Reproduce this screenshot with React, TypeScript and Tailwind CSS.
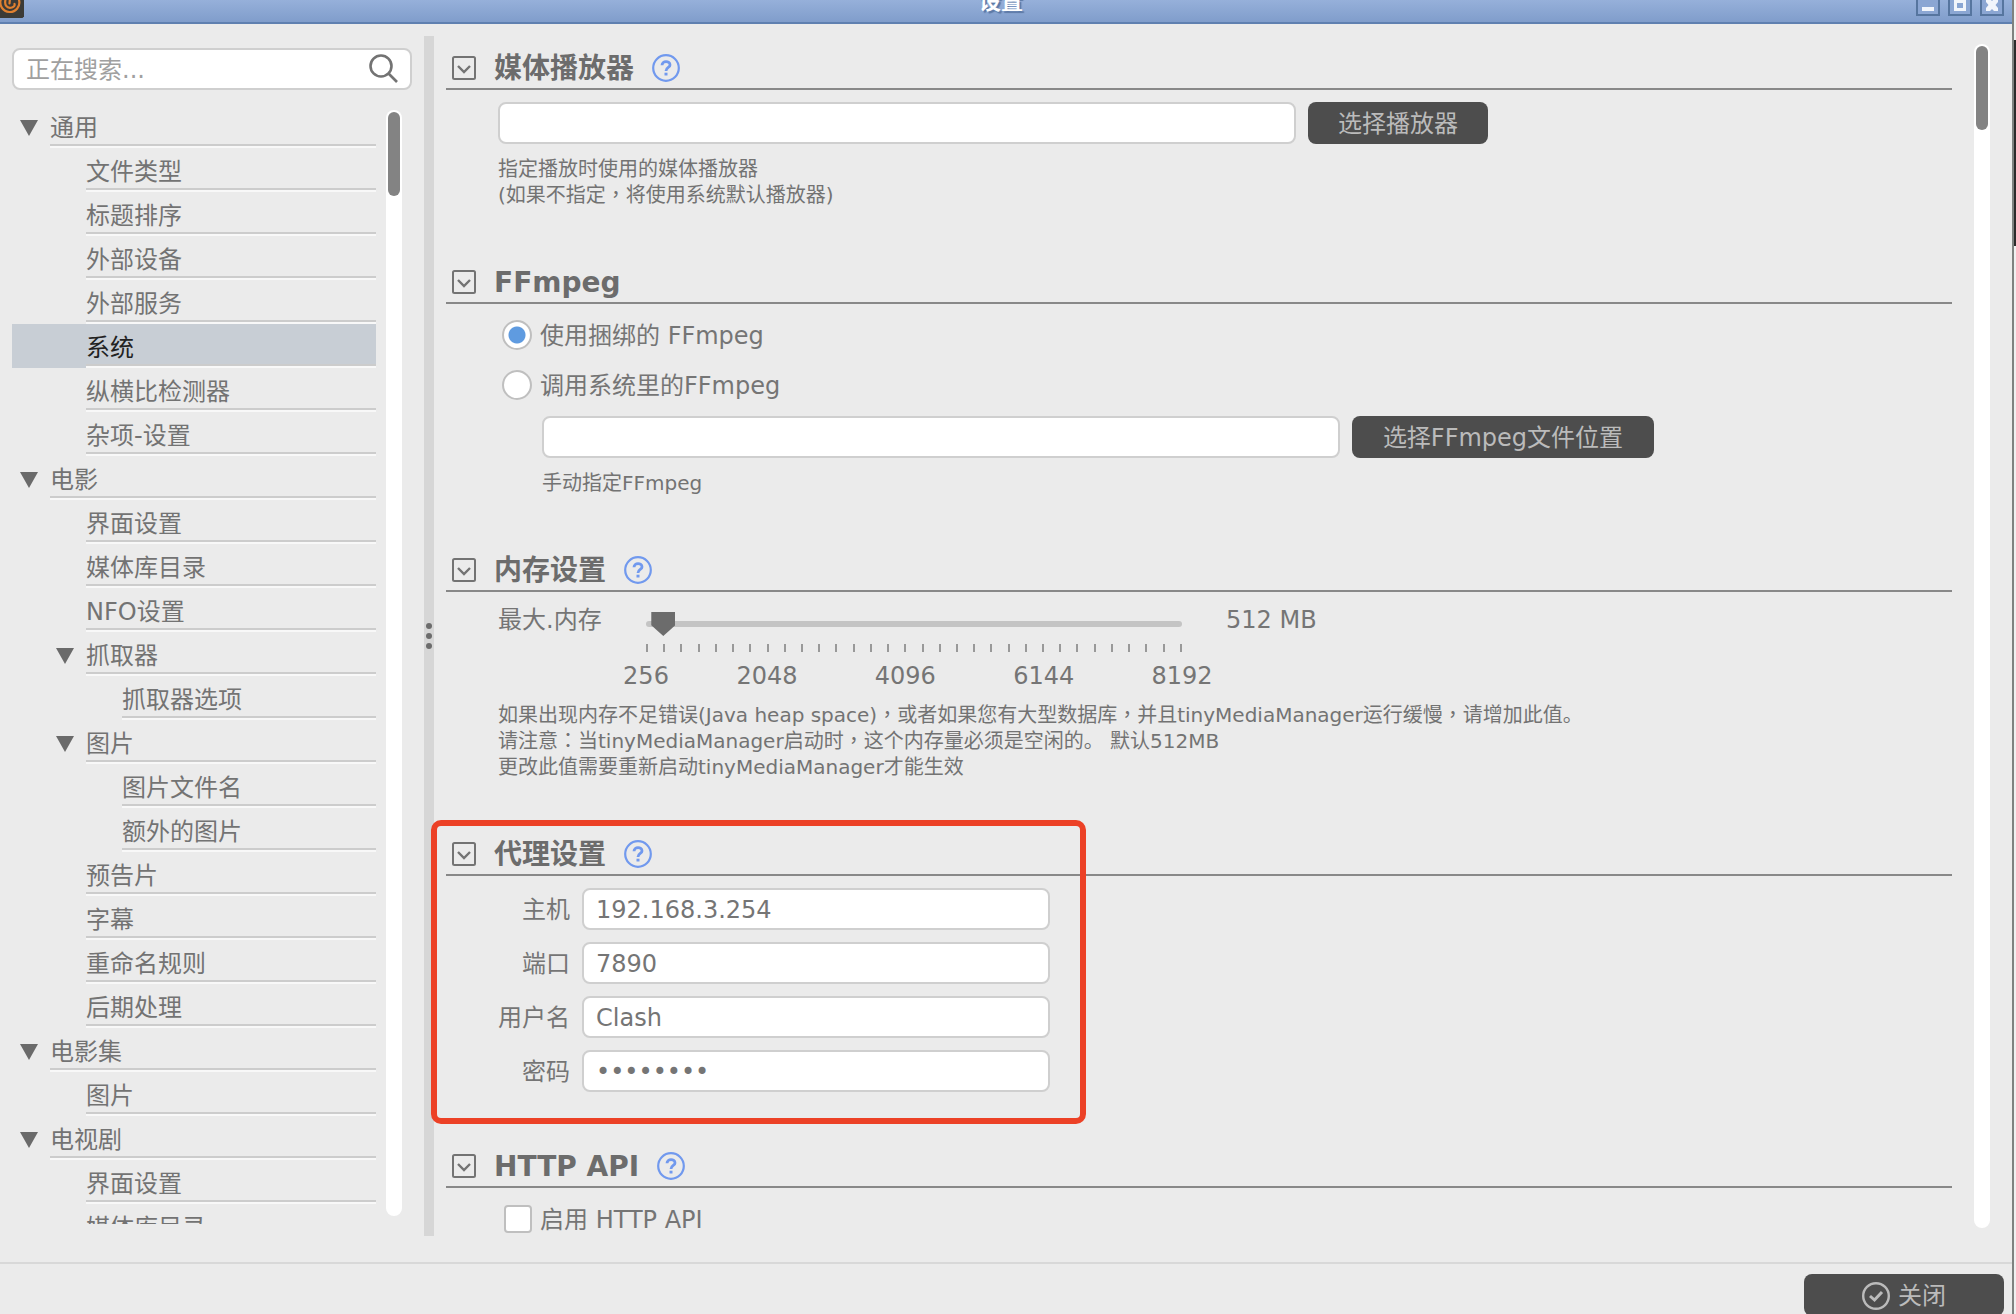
import { Fragment, useState } from "react";
import type { ReactNode } from "react";

type TreeItem = { label: string; level: 0 | 1 | 2; branch?: boolean };

const tree: TreeItem[] = [
  { label: "通用", level: 0, branch: true },
  { label: "文件类型", level: 1 },
  { label: "标题排序", level: 1 },
  { label: "外部设备", level: 1 },
  { label: "外部服务", level: 1 },
  { label: "系统", level: 1 },
  { label: "纵横比检测器", level: 1 },
  { label: "杂项-设置", level: 1 },
  { label: "电影", level: 0, branch: true },
  { label: "界面设置", level: 1 },
  { label: "媒体库目录", level: 1 },
  { label: "NFO设置", level: 1 },
  { label: "抓取器", level: 1, branch: true },
  { label: "抓取器选项", level: 2 },
  { label: "图片", level: 1, branch: true },
  { label: "图片文件名", level: 2 },
  { label: "额外的图片", level: 2 },
  { label: "预告片", level: 1 },
  { label: "字幕", level: 1 },
  { label: "重命名规则", level: 1 },
  { label: "后期处理", level: 1 },
  { label: "电影集", level: 0, branch: true },
  { label: "图片", level: 1 },
  { label: "电视剧", level: 0, branch: true },
  { label: "界面设置", level: 1 },
  { label: "媒体库目录", level: 1 },
];

const indent = { 0: "pl-2", 1: "pl-11", 2: "pl-20" };

const fieldClass =
  "h-[42px] min-w-0 rounded-lg border-2 border-[#cfcfcf] bg-white px-3 pt-0.5 text-2xl text-[#757575] outline-none";
const buttonClass =
  "h-[42px] shrink-0 rounded-lg bg-[#4d4d4d] pt-0.5 text-2xl leading-10 text-[#bbbbbb]";

function TitleBar() {
  return (
    <header className="relative flex h-6 shrink-0 items-end justify-between overflow-hidden border-b-2 border-[#5f80b0] bg-linear-to-b from-[#96b0da] to-[#809dcb]">
      <svg className="h-[18px] w-6 self-start" viewBox="0 0 24 18" aria-hidden="true">
        <path d="M0 0H24V16.5L22.5 18H0Z" fill="#3c3b37" />
        <g fill="none" stroke="#e08030" strokeWidth="2.2" strokeLinecap="round">
          <path d="M1 -1A9.5 9.5 0 1 0 19 0" />
          <path d="M6 -2C3.500 5 7 9 12 7.500C14 7 15 5.500 14.500 4" />
          <path d="M10 -2L9.500 3.500" />
        </g>
      </svg>
      <h1 className="absolute inset-x-0 -top-3.5 pr-2.5 text-center text-[22px] leading-8 font-bold text-white [text-shadow:2px_2px_1px_#5c79a6]">
        设置
      </h1>
      <div className="relative flex gap-2 pr-2 pb-1.5">
        <WindowButton label="最小化">
          <path d="M6 15H18V19H6Z" />
        </WindowButton>
        <WindowButton label="最大化">
          <path fillRule="evenodd" d="M6 6H18V19H6ZM9 11V16H15V11Z" />
        </WindowButton>
        <WindowButton label="关闭窗口">
          <path d="M6 7H10L12 9L14 7H18V10L15.500 13L18 16V19H14L12 17L10 19H6V16L8.500 13L6 10Z" />
        </WindowButton>
      </div>
    </header>
  );
}

function WindowButton({ label, children }: { label: string; children: ReactNode }) {
  return (
    <button type="button" aria-label={label} className="size-6 border-2 border-[#56759f] bg-[#8ba6d3]">
      <svg viewBox="2 2 20 20" className="size-5 fill-[#f2f5fb]" aria-hidden="true">
        {children}
      </svg>
    </button>
  );
}

function Scrollbar() {
  return (
    <div className="w-4 shrink-0 rounded-full bg-white p-0.5">
      <div className="h-[84px] rounded-full bg-[#838383]" />
    </div>
  );
}

function Sidebar() {
  const [selected, setSelected] = useState(5);
  return (
    <aside className="flex w-[424px] shrink-0 flex-col pt-6 pl-3">
      <div className="relative mr-3">
        <input
          type="search"
          aria-label="搜索"
          placeholder="正在搜索..."
          className={`${fieldClass} w-full pr-12 placeholder:text-[#a0a0a0]`}
        />
        <svg
          className="absolute top-1 right-3 size-8 fill-none stroke-[#737373] stroke-[2.6]"
          viewBox="0 0 32 32"
          aria-hidden="true"
        >
          <circle cx="13" cy="14" r="10.500" />
          <path d="M20.500 21.500L29 30" />
        </svg>
      </div>
      <div className="mt-3.5 flex min-h-0 flex-1 pb-3">
        <nav className="min-w-0 flex-1 overflow-hidden">
          {tree.map((item, i) => (
            <button
              key={i}
              type="button"
              onClick={() => setSelected(i)}
              className={`flex h-11 w-full text-left text-2xl ${indent[item.level]} ${
                i === selected ? "bg-[#c8ced5] text-[#222222]" : "text-[#737373]"
              }`}
            >
              <span className="flex w-[30px] shrink-0 pt-4">
                {item.branch && (
                  <svg className="h-4 w-[18px] fill-[#6a6a6a]" viewBox="0 0 18 16" aria-hidden="true">
                    <path d="M0 0H18L9 16Z" />
                  </svg>
                )}
              </span>
              <span className="h-full flex-1 border-b-2 border-[#f8f8f8]">
                <span className="block h-[42px] border-b-2 border-[#cccccc] pt-1.5 leading-9">{item.label}</span>
              </span>
            </button>
          ))}
        </nav>
        <div className="mt-1.5 mb-2 ml-2.5 flex w-[38px]">
          <Scrollbar />
        </div>
      </div>
    </aside>
  );
}

function Section({
  title,
  help,
  className,
  children,
}: {
  title: string;
  help?: boolean;
  className: string;
  children: ReactNode;
}) {
  return (
    <section className={`relative ${className}`}>
      <div className="flex h-11 items-center border-b-2 border-[#888888] pt-0.5 pl-1.5">
        <button type="button" aria-label={`折叠 ${title}`}>
          <svg className="size-6 fill-none stroke-[#737373] stroke-2" viewBox="0 0 24 24" aria-hidden="true">
            <rect x="1" y="1" width="22" height="22" rx="1.500" />
            <path d="M6 10L12 16L18 10" strokeWidth="2.400" />
          </svg>
        </button>
        <h2 className="ml-[18px] pt-0.5 text-[28px] leading-10 font-bold text-[#6c6c6c]">{title}</h2>
        {help && (
          <a href="#help" aria-label={`帮助 ${title}`} className="ml-[18px]">
            <svg className="size-7 fill-none stroke-[#7199ee]" viewBox="0 0 28 28" aria-hidden="true">
              <circle cx="14" cy="14" r="12.800" strokeWidth="2.200" />
              <path d="M10 11.200C10 6.500 18 6.500 18 11C18 13.700 14 13.300 14 17" strokeWidth="2.800" />
              <path d="M14 18.700V21.500" strokeWidth="3" />
            </svg>
          </a>
        )}
      </div>
      {children}
    </section>
  );
}

/* Full-width commas and colons sit in the middle of their cell. */
function Hint({ lines, className }: { lines: string[]; className?: string }) {
  return (
    <p className={`text-xl leading-[26px] text-[#737373] ${className ?? ""}`}>
      {lines.map((line) => (
        <span key={line} className="block">
          {line.split(/([，：])/).map((part, i) =>
            i % 2 === 1 ? (
              <span key={i} className="font-['Noto_Sans_CJK_TC'] leading-none">
                {part}
              </span>
            ) : (
              <Fragment key={i}>{part}</Fragment>
            ),
          )}
        </span>
      ))}
    </p>
  );
}

const ticks = Array.from({ length: 32 }, (_, i) => 256 + i * 256);
const tickLabels = [256, 2048, 4096, 6144, 8192];
const percent = (v: number) => `${((v - 256) / (8192 - 256)) * 100}%`;

function MemorySlider() {
  const [memory, setMemory] = useState(512);
  return (
    <div className="flex h-[110px] pt-2.5 pl-[52px] text-2xl leading-9 text-[#757575]">
      <label htmlFor="memory" className="w-[148px]">
        最大.内存
      </label>
      <div className="relative w-[536px]">
        <div className="absolute inset-x-0 top-[19px] h-1.5 rounded-full bg-[#c4c4c4]" />
        <input
          id="memory"
          type="range"
          min={256}
          max={8192}
          step={256}
          value={memory}
          onChange={(e) => setMemory(Number(e.target.value))}
          className="absolute top-2.5 -left-3 h-6 w-[560px] appearance-none bg-transparent [&::-webkit-slider-thumb]:h-6 [&::-webkit-slider-thumb]:w-6 [&::-webkit-slider-thumb]:appearance-none [&::-webkit-slider-thumb]:bg-[#6c6c6c] [&::-webkit-slider-thumb]:[clip-path:polygon(0_0,100%_0,100%_55%,50%_100%,0_55%)]"
        />
        <div className="flex justify-between pt-[42px]">
          {ticks.map((t) => (
            <span key={t} className="h-2 w-0.5 bg-[#999999]" />
          ))}
        </div>
        {tickLabels.map((v) => (
          <span key={v} className="absolute top-14 -translate-x-1/2" style={{ left: percent(v) }}>
            {v}
          </span>
        ))}
      </div>
      <output htmlFor="memory" className="ml-11 whitespace-pre">
        {memory} MB
      </output>
    </div>
  );
}

function Radio({ label, checked, onSelect }: { label: string; checked: boolean; onSelect: () => void }) {
  return (
    <label className="flex h-[50px] items-center text-2xl text-[#757575]">
      <input
        type="radio"
        name="ffmpeg"
        checked={checked}
        onChange={onSelect}
        className="mr-2 size-[30px] appearance-none rounded-full border-2 border-[#bfbfbf] bg-white bg-clip-padding checked:bg-[radial-gradient(circle,#5f9be0_8px,#ffffff_9px)]"
      />
      <span className="pt-0.5">{label}</span>
    </label>
  );
}

const proxy = [
  { id: "host", label: "主机", value: "192.168.3.254", type: "text" },
  { id: "port", label: "端口", value: "7890", type: "text" },
  { id: "user", label: "用户名", value: "Clash", type: "text" },
  { id: "password", label: "密码", value: "password", type: "password" },
];

function Settings() {
  const [bundled, setBundled] = useState(true);
  return (
    <main className="relative -ml-1 flex min-w-0 flex-1 pl-1">
      <div className="-ml-1 min-w-0 flex-1 overflow-hidden pt-[22px] pr-[22px] pl-4">
        <Section title="媒体播放器" help className="h-[214px]">
          <div className="mt-3 flex gap-3 pl-[52px]">
            <input type="text" aria-label="媒体播放器" className={`${fieldClass} w-[798px]`} />
            <button type="button" className={`${buttonClass} w-[180px]`}>
              选择播放器
            </button>
          </div>
          <Hint
            className="mt-3 pl-[52px]"
            lines={["指定播放时使用的媒体播放器", "(如果不指定，将使用系统默认播放器)"]}
          />
        </Section>

        <Section title="FFmpeg" className="h-72">
          <div className="pt-1.5 pl-14">
            <Radio label="使用捆绑的 FFmpeg" checked={bundled} onSelect={() => setBundled(true)} />
            <Radio label="调用系统里的FFmpeg" checked={!bundled} onSelect={() => setBundled(false)} />
          </div>
          <div className="mt-1.5 flex gap-3 pl-24">
            <input type="text" aria-label="FFmpeg 路径" className={`${fieldClass} w-[798px]`} />
            <button type="button" className={`${buttonClass} w-[302px]`}>
              选择FFmpeg文件位置
            </button>
          </div>
          <Hint className="mt-3 pl-24" lines={["手动指定FFmpeg"]} />
        </Section>

        <Section title="内存设置" help className="h-[284px]">
          <MemorySlider />
          <Hint
            className="pl-[52px]"
            lines={[
              "如果出现内存不足错误(Java heap space)，或者如果您有大型数据库，并且tinyMediaManager运行缓慢，请增加此值。",
              "请注意：当tinyMediaManager启动时，这个内存量必须是空闲的。 默认512MB",
              "更改此值需要重新启动tinyMediaManager才能生效",
            ]}
          />
        </Section>

        <Section title="代理设置" help className="h-[312px]">
          <div className="mt-3 flex flex-col gap-3">
            {proxy.map((f) => (
              <div key={f.id} className="flex items-center">
                <label htmlFor={f.id} className="w-[136px] pt-0.5 pr-3 text-right text-2xl text-[#757575]">
                  {f.label}
                </label>
                <input id={f.id} type={f.type} defaultValue={f.value} className={`${fieldClass} w-[468px]`} />
              </div>
            ))}
          </div>
          <div className="pointer-events-none absolute -top-3 -left-[15px] h-[304px] w-[655px] rounded-[10px] border-6 border-[#ec4126]" />
        </Section>

        <Section title="HTTP API" help className="h-24">
          <label className="flex h-[62px] items-center pl-[58px] text-2xl text-[#757575]">
            <input
              type="checkbox"
              className="mr-2 size-7 appearance-none rounded border-2 border-[#bfbfbf] bg-white checked:bg-[#5f9be0]"
            />
            <span className="pt-0.5">启用 HTTP API</span>
          </label>
        </Section>
      </div>
      <div className="mt-5 mr-[22px] mb-2 flex">
        <Scrollbar />
      </div>
    </main>
  );
}

export default function App() {
  return (
    <div className="flex h-screen overflow-hidden bg-[#ebebeb] font-['DejaVu_Sans','Noto_Sans_CJK_SC',sans-serif]">
      <div className="flex min-w-0 flex-1 flex-col">
        <TitleBar />
        <div className="flex min-h-0 flex-1">
          <Sidebar />
          <div className="mt-3 flex w-2.5 shrink-0 flex-col items-center justify-center gap-1 bg-[#d6d6d6]">
            <span className="size-1.5 rounded-full bg-[#6c6c6c]" />
            <span className="size-1.5 rounded-full bg-[#6c6c6c]" />
            <span className="size-1.5 rounded-full bg-[#6c6c6c]" />
          </div>
          <Settings />
        </div>
        <footer className="mt-[26px] flex h-[52px] shrink-0 justify-end border-t-2 border-[#d8d8d8] pt-2.5 pr-2">
          <button type="button" className={`${buttonClass} flex w-[200px] items-center justify-center gap-2`}>
            <svg className="size-7 fill-none stroke-[#bbbbbb]" viewBox="0 0 28 28" aria-hidden="true">
              <circle cx="14" cy="14" r="12.800" strokeWidth="2.400" />
              <path d="M8 14L12.500 18L20 10" strokeWidth="3" />
            </svg>
            关闭
          </button>
        </footer>
      </div>
      <div className="flex w-1 shrink-0 flex-col border-l-2 border-[#7f8280] bg-[#f0f0f0]">
        <div className="mt-10 h-[206px] bg-[#2b2b2b]" />
      </div>
    </div>
  );
}
